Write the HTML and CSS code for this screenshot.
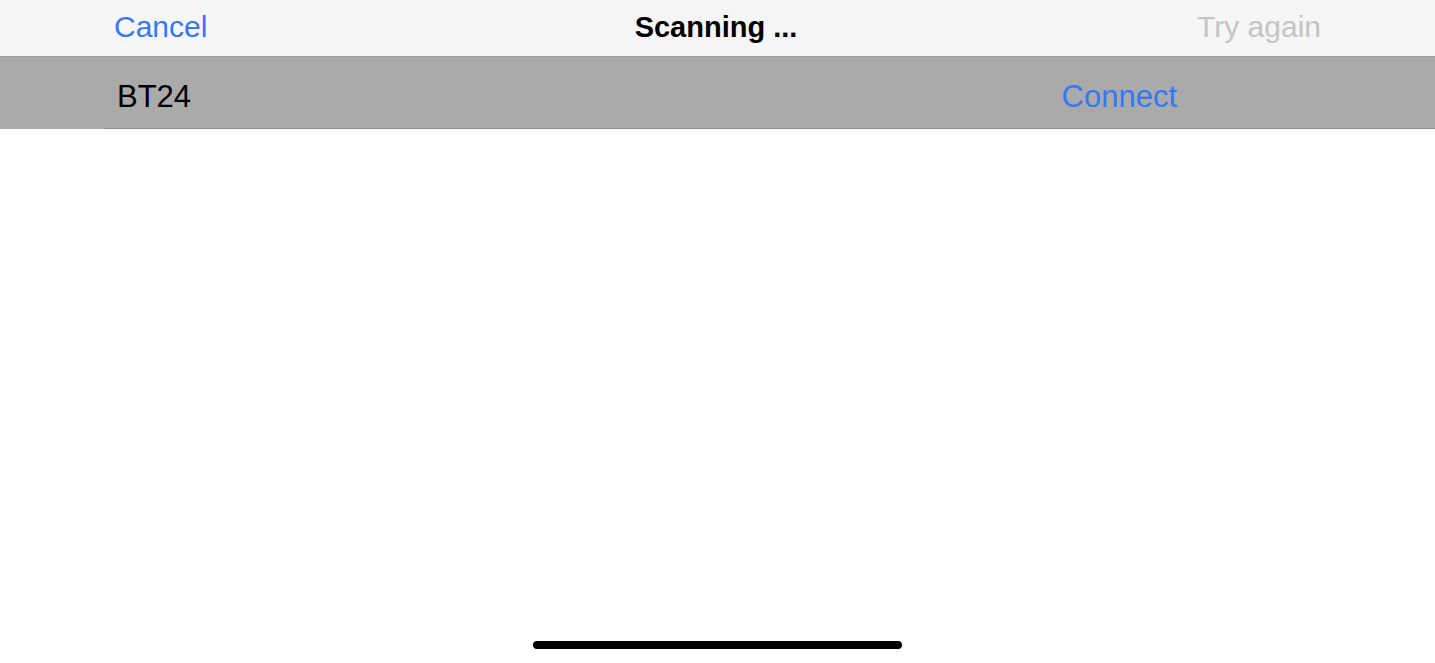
FILE: index.html
```html
<!DOCTYPE html>
<html lang="en">

<head>
  <meta charset="UTF-8" />
  <meta name="viewport" content="width=device-width, initial-scale=1.0">
  <title>Scanning</title>
  <link rel="stylesheet" href="styles.css">
</head>

<body>
  <div class="screen">
    <header class="nav-bar">
      <a href="#" class="nav-button">Cancel</a>
      <h1 class="nav-title">Scanning ...</h1>
      <span class="nav-button disabled">Try again</span>
    </header>
    <ul class="device-list">
      <li class="device-row">
        <span class="device-name">BT24</span>
        <a href="#" class="connect-button">Connect</a>
      </li>
    </ul>
    <div class="spacer"></div>
    <div class="home-indicator"></div>
  </div>
</body>

</html>
```

FILE: styles.css
```css
:root {
  --ios-blue: #3478f6;
  --nav-bg: #f6f6f6;
  --row-bg: #aaaaaa;
  --text-disabled: #c4c4c4;
}

* {
  margin: 0;
  padding: 0;
  box-sizing: border-box;
}

body {
  background: #fff;
  font-family: 'Liberation Sans', Arial, sans-serif;
  color: #000;
}

.screen {
  height: 663px;
  display: flex;
  flex-direction: column;
}

.nav-bar {
  height: 57px;
  display: flex;
  align-items: center;
  justify-content: space-between;
  padding: 0 114px 2px;
  background: var(--nav-bg);
  border-bottom: 1px solid #9c9c9c;
}

.nav-button {
  width: 200px;
  font-size: 30px;
  color: var(--ios-blue);
  text-decoration: none;
}

.nav-button.disabled {
  color: var(--text-disabled);
  text-align: right;
}

.nav-title {
  font-size: 29px;
  font-weight: 700;
  margin-left: -3px;
}

.device-list {
  list-style: none;
  background: var(--row-bg);
}

.device-row {
  height: 72px;
  display: flex;
  align-items: center;
  justify-content: space-between;
  padding: 7px 258px 0 117px;
  font-size: 31px;
  position: relative;
}

.device-row::after {
  content: '';
  position: absolute;
  left: 104px;
  right: 0;
  bottom: 0;
  height: 1px;
  background: #8c8c8c;
}

.connect-button {
  color: var(--ios-blue);
  text-decoration: none;
}

.spacer {
  flex: 1;
}

.home-indicator {
  align-self: center;
  width: 369px;
  height: 8px;
  margin-bottom: 14px;
  border-radius: 4px;
  background: #000;
}
```
